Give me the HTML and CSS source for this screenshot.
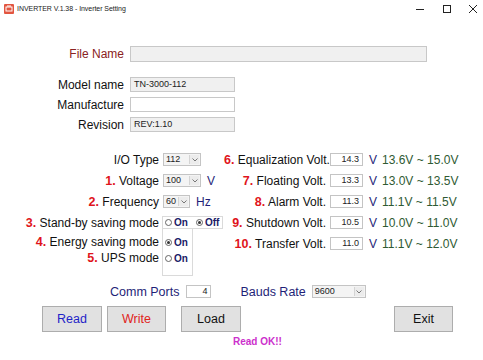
FILE: index.html
```html
<!DOCTYPE html>
<html>
<head>
<meta charset="utf-8">
<link rel="stylesheet" href="styles.css">
</head>
<body>
<div class="window">
  <div class="titlebar">
    <svg class="app-icon" width="10" height="10" viewBox="0 0 10 10">
      <rect x="0" y="0" width="10" height="10" rx="1" fill="#e2553f"/>
      <rect x="2" y="3" width="6" height="4" fill="none" stroke="#fff" stroke-width="1"/>
      <rect x="3" y="1.5" width="4" height="1" fill="#fff"/>
    </svg>
    <span class="title">INVERTER V.1.38 - Inverter Setting</span>
    <div class="controls">
      <svg width="10" height="10" viewBox="0 0 10 10"><line x1="1" y1="5.5" x2="9" y2="5.5" stroke="#222" stroke-width="1"/></svg>
      <svg width="10" height="10" viewBox="0 0 10 10"><rect x="1.5" y="1.5" width="7" height="7" fill="none" stroke="#222" stroke-width="1"/></svg>
      <svg width="10" height="10" viewBox="0 0 10 10"><path d="M1 1 L9 9 M9 1 L1 9" stroke="#222" stroke-width="1"/></svg>
    </div>
  </div>

  <div class="content">
    <div class="info">
      <div class="info-row file-row">
        <span class="info-label file-label">File Name</span>
        <div class="box ro file-box"></div>
      </div>
      <div class="info-row">
        <span class="info-label">Model name</span>
        <div class="box ro info-box">TN-3000-112</div>
      </div>
      <div class="info-row">
        <span class="info-label">Manufacture</span>
        <div class="box info-box"></div>
      </div>
      <div class="info-row">
        <span class="info-label">Revision</span>
        <div class="box ro info-box">REV:1.10</div>
      </div>
    </div>

    <div class="settings">
      <div class="left">
        <div class="lrow">
          <span class="llabel">I/O Type</span>
          <div class="select sel38"><span class="sel-text">112</span><span class="sel-btn"><svg width="6" height="4" viewBox="0 0 6 4"><path d="M0.5 0.5 L3 3 L5.5 0.5" fill="none" stroke="#777" stroke-width="1"/></svg></span></div>
        </div>
        <div class="lrow">
          <span class="llabel"><b class="num">1.</b> Voltage</span>
          <div class="select sel38"><span class="sel-text">100</span><span class="sel-btn"><svg width="6" height="4" viewBox="0 0 6 4"><path d="M0.5 0.5 L3 3 L5.5 0.5" fill="none" stroke="#777" stroke-width="1"/></svg></span></div>
          <span class="unit unit-v">V</span>
        </div>
        <div class="lrow">
          <span class="llabel"><b class="num">2.</b> Frequency</span>
          <div class="select sel27"><span class="sel-text">60</span><span class="sel-btn"><svg width="6" height="4" viewBox="0 0 6 4"><path d="M0.5 0.5 L3 3 L5.5 0.5" fill="none" stroke="#777" stroke-width="1"/></svg></span></div>
          <span class="unit unit-hz">Hz</span>
        </div>
        <div class="lrow standby-row">
          <span class="llabel"><b class="num">3.</b> Stand-by saving mode</span>
          <div class="radio-box standby-box">
            <span class="radio"></span><span class="rtext">On</span>
            <span class="radio checked gap"></span><span class="rtext">Off</span>
          </div>
        </div>
        <div class="mode-block">
          <div class="mode-labels">
            <span class="mlabel"><b class="num">4.</b> Energy saving mode</span>
            <span class="mlabel"><b class="num">5.</b> UPS mode</span>
          </div>
          <div class="radio-box mode-box">
            <div class="mitem"><span class="radio checked"></span><span class="rtext">On</span></div>
            <div class="mitem"><span class="radio"></span><span class="rtext">On</span></div>
          </div>
        </div>
      </div>

      <div class="right">
        <div class="rrow">
          <span class="rlabel"><b class="num">6.</b> Equalization Volt.</span>
          <div class="vbox">14.3</div><span class="unit vunit">V</span><span class="range">13.6V ~ 15.0V</span>
        </div>
        <div class="rrow">
          <span class="rlabel"><b class="num">7.</b> Floating Volt.</span>
          <div class="vbox">13.3</div><span class="unit vunit">V</span><span class="range">13.0V ~ 13.5V</span>
        </div>
        <div class="rrow">
          <span class="rlabel"><b class="num">8.</b> Alarm Volt.</span>
          <div class="vbox">11.3</div><span class="unit vunit">V</span><span class="range">11.1V ~ 11.5V</span>
        </div>
        <div class="rrow">
          <span class="rlabel"><b class="num">9.</b> Shutdown Volt.</span>
          <div class="vbox">10.5</div><span class="unit vunit">V</span><span class="range">10.0V ~ 11.0V</span>
        </div>
        <div class="rrow">
          <span class="rlabel"><b class="num">10.</b> Transfer Volt.</span>
          <div class="vbox">11.0</div><span class="unit vunit">V</span><span class="range">11.1V ~ 12.0V</span>
        </div>
      </div>
    </div>

    <div class="comm">
      <span class="comm-label">Comm Ports</span>
      <div class="vbox port-box">4</div>
      <span class="comm-label bauds-label">Bauds Rate</span>
      <div class="select sel54"><span class="sel-text">9600</span><span class="sel-btn"><svg width="6" height="4" viewBox="0 0 6 4"><path d="M0.5 0.5 L3 3 L5.5 0.5" fill="none" stroke="#777" stroke-width="1"/></svg></span></div>
    </div>

    <div class="buttons">
      <button class="btn btn-read">Read</button>
      <button class="btn btn-write">Write</button>
      <button class="btn btn-load">Load</button>
      <button class="btn btn-exit">Exit</button>
    </div>

    <div class="status">Read OK!!</div>
  </div>
</div>
</body>
</html>
```

FILE: styles.css
```css
* { box-sizing: border-box; }
html, body { margin: 0; padding: 0; background: #fff; }
body { font-family: "Liberation Sans", Arial, sans-serif; color: #111; width: 483px; height: 360px; overflow: hidden; }

.titlebar { height: 17px; display: flex; align-items: center; padding-left: 4px; }
.app-icon { display: block; flex: none; }
.title { font-size: 7px; margin-left: 3px; color: #222; letter-spacing: -0.05px; }
.controls { margin-left: auto; display: flex; align-items: center; }
.controls svg { display: block; margin-right: 16px; }
.controls svg:first-child { margin-right: 17px; }
.controls svg:last-child { margin-right: 5px; }

.content { padding-top: 29px; }

.info-row { display: flex; align-items: center; height: 15px; margin-bottom: 5px; }
.file-row { height: 16px; margin-bottom: 15px; }
.info-label { width: 127px; text-align: right; padding-right: 3px; font-size: 12px; }
.file-label { color: #8a2222; }
.box { height: 15px; border: 1px solid #c8c8c8; background: #fff; font-size: 9px; line-height: 13px; padding-left: 3px; color: #222; }
.box.ro { background: #f0f0f0; }
.file-box { width: 297px; height: 16px; margin-left: 3px; }
.info-box { width: 105px; margin-left: 3px; }

.settings { display: flex; margin-top: 17px; }
.left { width: 224px; flex: none; }
.lrow { display: flex; align-items: center; height: 21px; }
.llabel { width: 162px; text-align: right; padding-right: 3px; font-size: 12px; white-space: nowrap; flex: none; }
.num { color: #e0141c; font-weight: bold; font-size: 12.5px; }

.select { display: flex; height: 13px; border: 1px solid #c4c4c4; background: #f4f4f4; margin-left: 1px; }
.sel38 { width: 38px; }
.sel27 { width: 27px; }
.sel54 { width: 54px; }
.sel-text { flex: 1; font-size: 9px; line-height: 11px; padding-left: 2px; color: #222; }
.sel-btn { width: 10px; border-left: 1px solid #d4d4d4; background: #ececec; display: flex; align-items: center; justify-content: center; margin: 1px 1px 1px 0; }
.sel-btn svg { display: block; }

.unit { color: #1f1f78; font-size: 12px; }
.unit-v { margin-left: 6px; }
.unit-hz { margin-left: 6px; }

.standby-row { height: 17px; padding-top: 4px; }
.radio-box { border: 1px solid #dadada; background: #fff; }
.standby-box { width: 61px; height: 13px; display: flex; align-items: center; padding-left: 2px; }
.radio { width: 7px; height: 7px; border: 1px solid #666; border-radius: 50%; display: inline-block; position: relative; flex: none; background: #fff; }
.radio.checked::after { content: ""; position: absolute; left: 1px; top: 1px; width: 3px; height: 3px; border-radius: 50%; background: #333; }
.radio.gap { margin-left: 8px; }
.rtext { font-size: 10px; font-weight: bold; color: #1a1a66; margin-left: 2px; }

.mode-block { display: flex; height: 47px; }
.mode-labels { width: 162px; display: flex; flex-direction: column; padding-top: 5px; flex: none; }
.mlabel { height: 16px; line-height: 16px; text-align: right; padding-right: 3px; font-size: 12px; white-space: nowrap; }
.mode-box { width: 31px; border-top: none; padding-top: 5px; padding-left: 2px; }
.mitem { height: 16px; display: flex; align-items: center; }

.right { flex: none; }
.rrow { display: flex; align-items: center; height: 21px; }
.rlabel { width: 106px; text-align: right; padding-right: 4px; font-size: 12px; white-space: nowrap; flex: none; }
.vbox { width: 33px; height: 13px; border: 1px solid #c4c4c4; background: #fff; font-size: 9px; line-height: 11px; text-align: right; padding-right: 3px; color: #222; flex: none; }
.vunit { margin-left: 6px; }
.range { margin-left: 5px; font-size: 12px; color: #2f5a33; }

.comm { display: flex; align-items: center; height: 15px; margin-top: 8px; padding-left: 110px; }
.comm-label { color: #1f1f78; font-size: 12.5px; }
.port-box { width: 25px; height: 13px; margin-left: 7px; }
.bauds-label { margin-left: 29px; margin-right: 5px; }

.buttons { display: flex; margin-top: 7px; padding-left: 42px; padding-right: 30px; }
.btn { height: 26px; width: 60px; background: #e1e1e1; border: 1px solid #adadad; font-family: "Liberation Sans", Arial, sans-serif; font-size: 12.5px; padding: 0; border-radius: 0; }
.btn-read { color: #1f24c8; }
.btn-write { color: #e0241c; width: 59px; margin-left: 5px; }
.btn-load { color: #111; margin-left: 15px; }
.btn-exit { color: #111; margin-left: auto; width: 59px; }

.status { margin-top: 4px; padding-left: 233px; font-size: 10px; font-weight: bold; color: #cc30cc; line-height: 12px; }
```
